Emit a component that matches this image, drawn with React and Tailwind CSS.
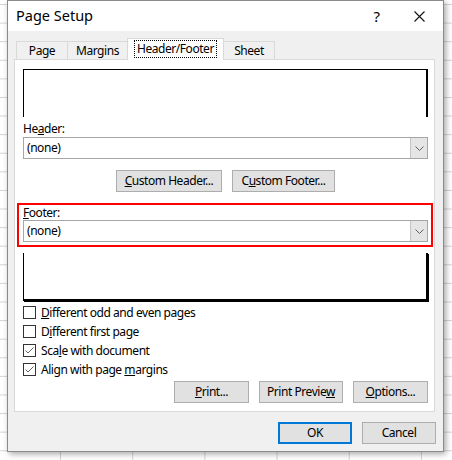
import React from 'react';

const font = { fontFamily: '"Noto Sans", "Liberation Sans", sans-serif' };

const Select = ({ value }) => (
  <div className="flex h-[22px] border border-[#a6a6a6] bg-white">
    <div className="flex-1 flex items-center pl-[3px] text-[12px] text-black">{value}</div>
    <div className="w-[17px] flex items-center justify-center bg-[#e5e5e5] border-l border-[#c4c4c4]">
      <svg width="9" height="5" viewBox="0 0 9 5" fill="none" stroke="#606060" strokeWidth="1">
        <path d="M0.5 0.5 L4.5 4.5 L8.5 0.5" />
      </svg>
    </div>
  </div>
);

const Btn = ({ children, className = '' }) => (
  <button className={`h-[22px] bg-[#e1e1e1] border border-[#adadad] text-[12px] text-black flex items-center justify-center ${className}`}>
    {children}
  </button>
);

const Check = ({ checked, children }) => (
  <div className="h-[19px] flex items-center gap-[5px]">
    <div className="w-[13px] h-[13px] border border-[#333] bg-white flex items-center justify-center">
      {checked && (
        <svg width="11" height="11" viewBox="0 0 11 11" fill="none" stroke="#666" strokeWidth="1">
          <path d="M1.5 5.5 L4 8 L9.5 2.5" />
        </svg>
      )}
    </div>
    <span className="text-[12px] text-black leading-none">{children}</span>
  </div>
);

const Tab = ({ label, active, width }) =>
  active ? (
    <div className={`${width} h-[22px] -mb-px -ml-px relative z-10 bg-white border-t border-x border-[#d9d9d9] flex items-start justify-center pt-[1px]`}>
      <span className="h-[18px] px-[2px] flex items-center border border-dotted border-black text-[12px] text-black">{label}</span>
    </div>
  ) : (
    <div className={`${width} h-[18px] -ml-px first:ml-0 border-t border-x border-[#d9d9d9] flex items-center justify-center text-[12px] text-black`}>
      {label}
    </div>
  );

export default function App() {
  return (
    <div
      className="w-[452px] h-[460px] overflow-hidden bg-white bg-[linear-gradient(#d4d4d4_1px,transparent_1px),linear-gradient(90deg,#d4d4d4_1px,transparent_1px)] bg-size-[72.2px_18.6px] bg-position-[60px_4px]"
      style={font}
    >
      <div className="ml-[7px] w-[437px] h-[452px] flex flex-col bg-[#f0f0f0] border border-[#8a8a8a] shadow-[2px_2px_6px_rgba(0,0,0,0.35)]">
        {/* Title bar */}
        <div className="h-[30px] bg-white flex items-center pl-[8px] pr-[18px]">
          <span className="text-[14.5px] text-black flex-1">Page Setup</span>
          <span className="text-[15px] text-black mr-[34px]">?</span>
          <svg width="11" height="11" viewBox="0 0 11 11" stroke="#111" strokeWidth="1.1">
            <path d="M0.5 0.5 L10.5 10.5 M10.5 0.5 L0.5 10.5" />
          </svg>
        </div>

        <div className="flex-1 flex flex-col pt-[7px] pl-[6px] pr-[7px] tracking-[-0.45px]">
          {/* Tabs */}
          <div className="h-[21px] flex items-end pl-[2px]">
            <Tab label="Page" width="w-[52px]" />
            <Tab label="Margins" width="w-[61px]" />
            <Tab label="Header/Footer" width="w-[97px]" active />
            <Tab label="Sheet" width="w-[52px]" />
          </div>

          {/* Panel */}
          <div className="h-[353px] mr-[1px] bg-white border border-[#d9d9d9] flex flex-col pt-[9px] pl-[8px] pr-[6px] pb-[8px]">
            <div className="h-[48px] border-t border-l border-r-2 border-black" />
            <div className="mt-[4px] h-[16px] flex items-center text-[12px] text-black">
              <span>He<u>a</u>der:</span>
            </div>
            <Select value="(none)" />
            <div className="mt-[11px] flex justify-center gap-[10px]">
              <Btn className="w-[106px]"><span><u>C</u>ustom Header...</span></Btn>
              <Btn className="w-[103px]"><span>C<u>u</u>stom Footer...</span></Btn>
            </div>
            <div className="mt-[11px] ml-[-6px] mr-[-5px] h-[44px] border-2 border-[#ff0000] pl-[4px] pr-[3px] flex flex-col">
              <div className="h-[15px] flex items-center text-[12px] text-black">
                <span><u>F</u>ooter:</span>
              </div>
              <Select value="(none)" />
            </div>
            <div className="mt-[6px] h-[48px] border-l border-r-2 border-b-2 border-black shadow-[1px_1px_0_#000]" />
            <div className="mt-[2px] flex flex-col">
              <Check><u>D</u>ifferent odd and even pages</Check>
              <Check>D<u>i</u>fferent first page</Check>
              <Check checked>Sca<u>l</u>e with document</Check>
              <Check checked>Align with page <u>m</u>argins</Check>
            </div>
            <div className="mt-[2px] flex justify-end gap-[10px]">
              <Btn className="w-[75px]"><span><u>P</u>rint...</span></Btn>
              <Btn className="w-[84px]"><span>Print Previe<u>w</u></span></Btn>
              <Btn className="w-[75px]"><span><u>O</u>ptions...</span></Btn>
            </div>
          </div>

          {/* OK / Cancel */}
          <div className="mt-[10px] flex justify-end gap-[10px]">
            <button className="w-[74px] h-[22px] bg-[#e1e1e1] border-2 border-[#0078d7] text-[12px] text-black">OK</button>
            <Btn className="w-[74px]">Cancel</Btn>
          </div>
        </div>
      </div>
    </div>
  );
}
